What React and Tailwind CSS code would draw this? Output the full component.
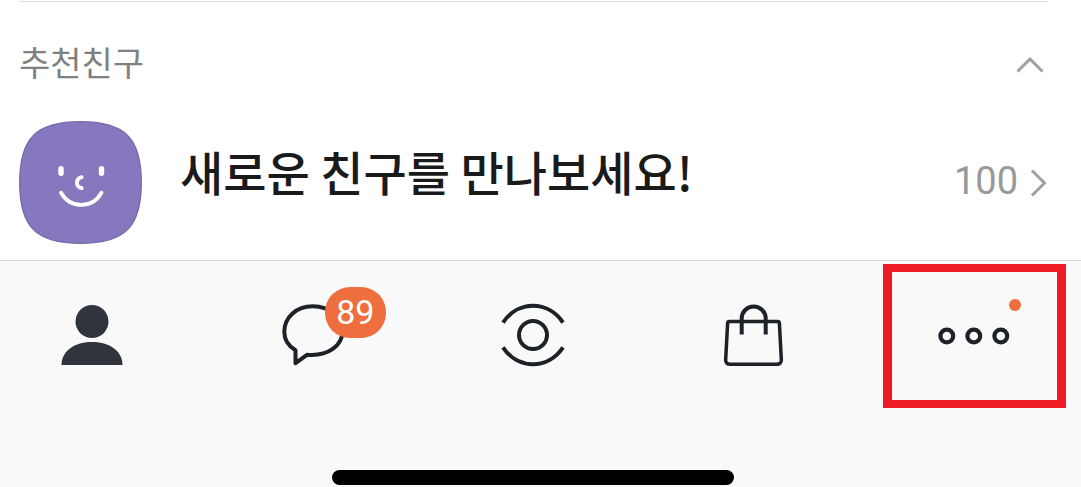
import React from "react";

function PersonIcon() {
  return (
    <svg width="73" height="72" viewBox="0 0 73 72" fill="#30343d" aria-hidden="true">
      <circle cx="37" cy="21.500" r="16.500" />
      <path d="M6.500 65C6.500 52 18 42 37 42S67.500 52 67.500 65Z" />
    </svg>
  );
}

function ChatIcon() {
  return (
    <svg width="73" height="72" viewBox="0 0 73 72" fill="none" stroke="#1d2128" strokeWidth="4" strokeLinejoin="round" aria-hidden="true">
      <path d="M19.500 50.200C12.200 46 8.300 39.500 8.300 31.800C8.300 17.500 20 6.300 36.800 6.300C53.500 6.300 66.500 17.300 66.500 30.800C66.500 45.500 52.500 56.600 31 54.800L19.500 63.200Z" />
    </svg>
  );
}

function EyeIcon() {
  return (
    <svg width="73" height="72" viewBox="0 0 73 72" fill="none" stroke="#1d2128" strokeWidth="4" aria-hidden="true">
      <circle cx="36" cy="35" r="14" />
      <path d="M6 22.600C13 12 24 5.800 36 5.800S59 12 66 22.600" />
      <path d="M6 47.400C13 58 24 64.200 36 64.200S59 58 66 47.400" />
    </svg>
  );
}

function BagIcon() {
  return (
    <svg width="73" height="72" viewBox="0 0 73 72" fill="none" stroke="#1d2128" aria-hidden="true">
      <path strokeWidth="3.500" d="M12.500 21.500H60.500Q62.300 21.500 62.400 23.300L64.300 59Q64.800 64.300 59.500 64.300H13.500Q8.200 64.300 8.700 59L10.600 23.300Q10.700 21.500 12.500 21.500Z" />
      <path strokeWidth="4" d="M24.700 34.500V18.500A12 12 0 0 1 48.700 18.500V34.500" />
    </svg>
  );
}

function MoreIcon() {
  return (
    <svg width="73" height="72" viewBox="0 0 73 72" fill="none" stroke="#1d2128" strokeWidth="4.200" aria-hidden="true">
      <circle cx="8.800" cy="36" r="6.400" />
      <circle cx="35.800" cy="36" r="6.400" />
      <circle cx="62.800" cy="36" r="6.400" />
    </svg>
  );
}

function FaceAvatar() {
  return (
    <svg className="shrink-0" width="123" height="123" viewBox="0 0 123 123" aria-hidden="true">
      <path
        d="M61.500 .700C106 .700 122.300 17 122.300 61.500S106 122.300 61.500 122.300S.700 106 .700 61.500S17 .700 61.500 .700Z"
        fill="#8677bf"
        stroke="#7669ab"
        strokeWidth="1.300"
      />
      <g fill="none" stroke="#fff" strokeLinecap="round">
        <path strokeWidth="5.400" d="M42 47.800V52.200M82.500 47.800V52.200" />
        <path strokeWidth="3.800" d="M62.700 56.200C56.300 58 56.300 65.500 62.700 67.200" />
        <path strokeWidth="3.800" d="M42 71.700C51.500 88 73.500 88 82.500 71.700" />
      </g>
    </svg>
  );
}

const tabs = [
  { label: "친구", Icon: PersonIcon },
  { label: "채팅", Icon: ChatIcon, badge: 89 },
  { label: "뷰", Icon: EyeIcon },
  { label: "쇼핑", Icon: BagIcon },
  { label: "더보기", Icon: MoreIcon, dot: true, highlighted: true },
];

export default function App() {
  return (
    <div className="flex min-h-screen flex-col bg-white font-['Noto_Sans_CJK_KR',sans-serif]">
      <main className="pt-px pr-[33px] pb-4 pl-[19px]">
        <section className="border-t border-[#dedede] pt-[34px]">
          <button type="button" aria-expanded="true" className="flex w-full items-center justify-between pr-1">
            <h2 className="pb-1 text-[34px] leading-[52px] text-[#808080]">추천친구</h2>
            <svg width="28" height="17" viewBox="0 0 28 17" fill="none" stroke="#a0a0a0" strokeWidth="3" aria-hidden="true">
              <path d="M1.500 15.500L14 3L26.500 15.500" />
            </svg>
          </button>
          <a href="#recommended" className="mt-[29px] flex items-center">
            <FaceAvatar />
            <span className="ml-[38px] pb-6 text-[47px] leading-[60px] font-medium text-[#1a1a1a]">새로운 친구를 만나보세요!</span>
            <span className="ml-auto pb-1 font-[Roboto] text-[38px] leading-[48px] text-[#999999]">100</span>
            <svg className="ml-3" width="18" height="28" viewBox="0 0 18 28" fill="none" stroke="#a0a0a0" strokeWidth="3" aria-hidden="true">
              <path d="M2 1.500L14.500 14L2 26.500" />
            </svg>
          </a>
        </section>
      </main>
      <footer className="flex grow flex-col justify-between border-t border-[#d6d6d6] bg-[#f9f9f9] pt-[3px] pr-[15px] pb-0.5">
        <nav className="flex justify-between">
          {tabs.map(({ label, Icon, badge, dot, highlighted }) => (
            <button
              key={label}
              type="button"
              aria-label={label}
              className={
                "relative flex h-36 w-[183px] items-center justify-center " +
                (highlighted ? "border-x-9 border-y-8 border-[#ed1c24]" : "")
              }
            >
              <Icon />
              {badge && (
                <span className="absolute top-[23px] left-[104px] flex h-[51px] w-[61px] items-center justify-center rounded-[25px] bg-[#ee6e3e] font-[Roboto] text-[34px] text-white">
                  {badge}
                </span>
              )}
              {dot && <span className="absolute top-[27px] right-9 size-3 rounded-full bg-[#ee6e3e]" />}
            </button>
          ))}
        </nav>
        <div className="h-[15px] w-[402px] self-center rounded-full bg-black" />
      </footer>
    </div>
  );
}
